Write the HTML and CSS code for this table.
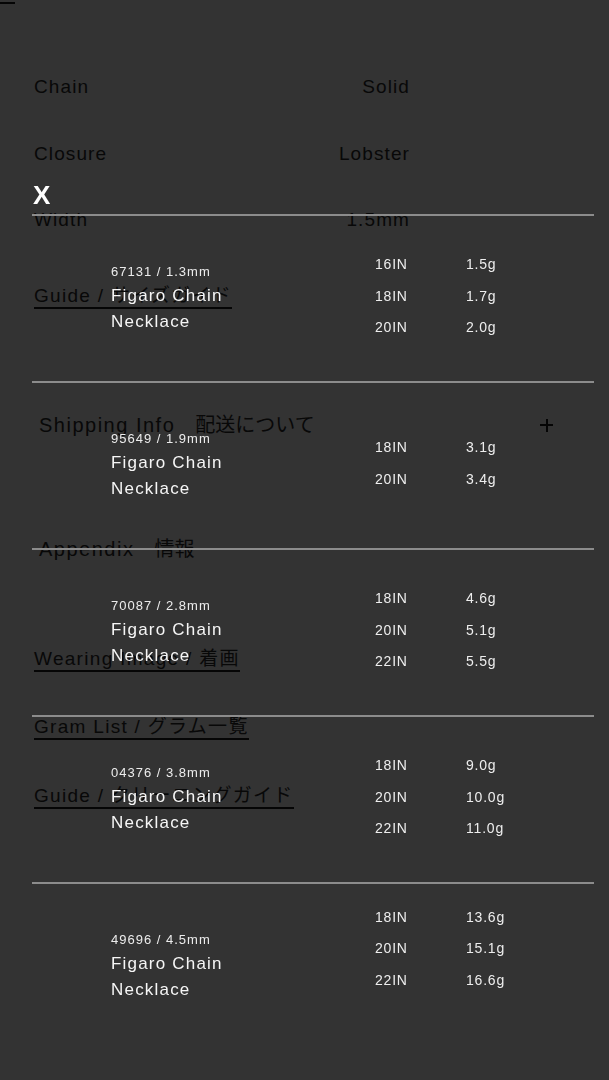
FILE: index.html
```html
<!DOCTYPE html>
<html lang="ja">
<head>
<meta charset="utf-8">
<title>Gram List</title>
<link rel="stylesheet" href="styles.css">
</head>
<body>
<div class="page">
  <header class="topbar"><span class="menu-mark"></span></header>
  <dl class="specs">
    <div class="spec-row"><dt>Chain</dt><dd>Solid</dd></div>
    <div class="spec-row"><dt>Closure</dt><dd>Lobster</dd></div>
    <div class="spec-row"><dt>Width</dt><dd>1.5mm</dd></div>
  </dl>
  <a class="link link-guide">Guide / サイズガイド</a>
  <div class="acc acc-shipping">
    <span class="acc-title">Shipping Info<span class="jp">　配送について</span></span>
    <span class="acc-plus"></span>
  </div>
  <div class="acc acc-appendix">
    <span class="acc-title">Appendix<span class="jp">　情報</span></span>
    <span class="acc-minus"></span>
  </div>
  <a class="link link-wearing">Wearing Image / 着画</a>
  <a class="link link-gram">Gram List / グラム一覧</a>
  <a class="link link-guide2">Guide / クリーニングガイド</a>
</div>

<div class="overlay">
  <button class="close">X</button>
  <div class="gram-list">
    <div class="gram-row">
      <div class="name"><span class="code">67131 / 1.3mm</span><span class="title">Figaro Chain<br>Necklace</span></div>
      <ul class="sizes"><li>16IN</li><li>18IN</li><li>20IN</li></ul>
      <ul class="weights"><li>1.5g</li><li>1.7g</li><li>2.0g</li></ul>
    </div>
    <div class="gram-row">
      <div class="name"><span class="code">95649 / 1.9mm</span><span class="title">Figaro Chain<br>Necklace</span></div>
      <ul class="sizes"><li>18IN</li><li>20IN</li></ul>
      <ul class="weights"><li>3.1g</li><li>3.4g</li></ul>
    </div>
    <div class="gram-row">
      <div class="name"><span class="code">70087 / 2.8mm</span><span class="title">Figaro Chain<br>Necklace</span></div>
      <ul class="sizes"><li>18IN</li><li>20IN</li><li>22IN</li></ul>
      <ul class="weights"><li>4.6g</li><li>5.1g</li><li>5.5g</li></ul>
    </div>
    <div class="gram-row">
      <div class="name"><span class="code">04376 / 3.8mm</span><span class="title">Figaro Chain<br>Necklace</span></div>
      <ul class="sizes"><li>18IN</li><li>20IN</li><li>22IN</li></ul>
      <ul class="weights"><li>9.0g</li><li>10.0g</li><li>11.0g</li></ul>
    </div>
    <div class="gram-row">
      <div class="name"><span class="code">49696 / 4.5mm</span><span class="title">Figaro Chain<br>Necklace</span></div>
      <ul class="sizes"><li>18IN</li><li>20IN</li><li>22IN</li><li>24IN</li></ul>
      <ul class="weights"><li>13.6g</li><li>15.1g</li><li>16.6g</li><li>18.1g</li></ul>
    </div>
  </div>
</div>
</body>
</html>
```
FILE: styles.css
```css
* { box-sizing: border-box; }
html, body { margin: 0; padding: 0; }
body {
  background: #333333;
  font-family: "Liberation Sans", Arial, "Noto Sans CJK JP", sans-serif;
  color: #080808;
  height: 1080px;
  overflow: hidden;
}
.page {
  display: flex;
  flex-direction: column;
  align-items: flex-start;
}
.topbar { height: 54px; width: 100%; }
.menu-mark { display: block; width: 15px; height: 2px; margin-top: 2px; background: #050505; }

.specs { margin: 0 0 0 34px; width: 376px; padding: 0; }
.spec-row {
  height: 66.5px;
  display: flex;
  justify-content: space-between;
  align-items: center;
  font-size: 19px;
  letter-spacing: 1.1px;
}
.spec-row dt, .spec-row dd { margin: 0; }

.link {
  font-size: 19px;
  letter-spacing: 1.3px;
  line-height: 22px;
  margin-left: 34px;
  border-bottom: 2px solid #050505;
  color: #080808;
}
.link-guide { margin-top: 31.5px; }
.link-wearing { margin-top: 87px; }
.link-gram { margin-top: 44px; }
.link-guide2 { margin-top: 45px; }

.acc {
  width: 100%;
  display: flex;
  justify-content: space-between;
  align-items: center;
  padding: 0 56px 0 39px;
  font-size: 20px;
  letter-spacing: 1.5px;
  line-height: 24px;
}
.acc .jp { letter-spacing: 0; }
.acc-shipping { margin-top: 104px; }
.acc-appendix { margin-top: 100px; }
.acc-plus, .acc-minus { position: relative; width: 13px; height: 13px; }
.acc-plus::before, .acc-minus::before {
  content: ""; position: absolute; left: 0; top: 5.5px; width: 13px; height: 2px; background: #050505;
}
.acc-plus::after {
  content: ""; position: absolute; left: 5.5px; top: 0; width: 2px; height: 13px; background: #050505;
}

.overlay {
  position: fixed;
  inset: 0;
  padding: 181px 15px 0 32px;
  color: #f2f2f2;
  font-family: "Liberation Sans", Arial, sans-serif;
}
.close {
  display: block;
  background: none;
  border: 0;
  padding: 0;
  margin: 0 0 5px 1px;
  font-family: "Liberation Sans", Arial, sans-serif;
  font-weight: bold;
  font-size: 26px;
  line-height: 28px;
  height: 28px;
  color: #ffffff;
}
.gram-list {
  height: 791px;
  overflow: hidden;
}
.gram-row {
  height: 167px;
  border-top: 2px solid #8c8c8c;
  display: grid;
  grid-template-columns: 264px 91px 1fr;
  align-items: center;
  padding: 0 0 2px 79px;
}
.name { display: flex; flex-direction: column; }
.code { font-size: 13px; letter-spacing: 1px; line-height: 22px; color: #ececec; }
.title { font-size: 17px; letter-spacing: 1.2px; line-height: 26px; color: #f6f6f6; }
.sizes, .weights {
  list-style: none;
  margin: 0;
  padding: 0;
  font-size: 14px;
  letter-spacing: 0.8px;
  line-height: 31.5px;
  color: #eeeeee;
  margin-top: -2px;
}
```
